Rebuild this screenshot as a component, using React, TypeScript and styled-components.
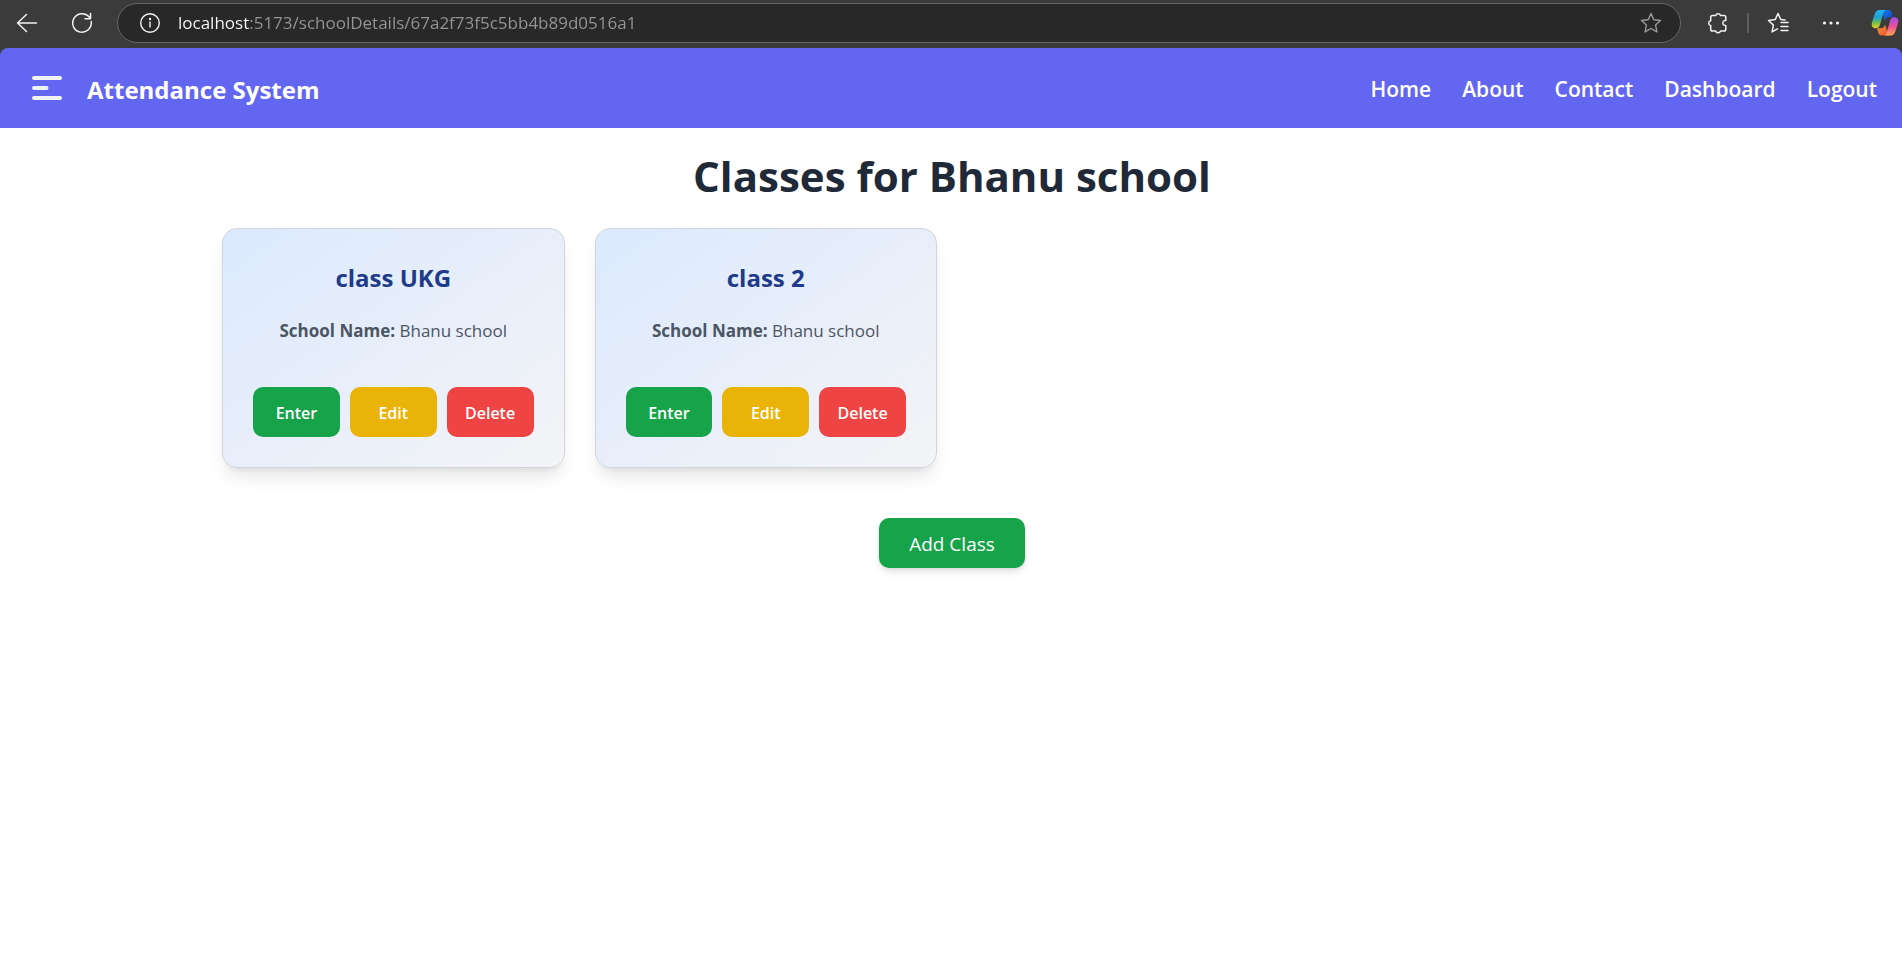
import React from "react";
import styled, { createGlobalStyle } from "styled-components";

const GlobalStyle = createGlobalStyle`
  *, *::before, *::after { box-sizing: border-box; }
  body {
    margin: 0;
    background: #ffffff;
    font-family: "Open Sans", "Noto Sans", sans-serif;
    font-size: 17px;
    line-height: 28px;
  }
  button, input { font: inherit; }
  h1, h2, p, ul { margin: 0; padding: 0; }
`;

const BrowserBar = styled.header`
  display: flex;
  align-items: center;
  height: 48px;
  padding: 0 3px 2px 12px;
  background: #3b3b3b;
  color: #f2f2f2;
`;

const IconButton = styled.button<{ $muted?: boolean }>`
  display: flex;
  flex: none;
  align-items: center;
  justify-content: center;
  padding: 0;
  border: 0;
  background: none;
  color: ${(p) => (p.$muted ? "#9b9b9b" : "#f2f2f2")};
  cursor: pointer;
`;

const StartTools = styled.div`
  display: flex;
  gap: 29px;
  margin-right: 24px;
`;

const AddressBar = styled.div`
  display: flex;
  flex: 1;
  align-items: center;
  gap: 17px;
  height: 40px;
  padding: 0 18px 0 21px;
  border: 1px solid #686868;
  border-radius: 20px;
  background: #282828;
`;

const AddressInput = styled.input`
  flex: 1;
  min-width: 0;
  height: 28px;
  padding: 0;
  border: 0;
  outline: 0;
  color: #969696;
  background: linear-gradient(90deg, #ffffff 71px, #969696 71px);
  background-clip: text;
  -webkit-background-clip: text;
  -webkit-text-fill-color: transparent;
`;

const EndTools = styled.div`
  display: flex;
  align-items: center;
  gap: 30px;
  margin-left: 26px;
`;

const ToolGroup = styled.div`
  display: flex;
  align-items: center;
  gap: 18px;
`;

const Divider = styled.span`
  width: 2px;
  height: 20px;
  background: #5e5e5e;
`;

const PageTop = styled.div`
  background: #3b3b3b;
`;

const NavBar = styled.nav`
  display: flex;
  align-items: center;
  justify-content: space-between;
  height: 80px;
  padding: 0 25px 0 30px;
  border-radius: 8px 8px 0 0;
  background: #6366f1;
  color: #ffffff;
`;

const Brand = styled.div`
  display: flex;
  align-items: center;
  gap: 23px;
`;

const BrandName = styled.span`
  padding-top: 3px;
  font-size: 24px;
  font-weight: 700;
  line-height: 32px;
`;

const NavLinks = styled.ul`
  display: flex;
  gap: 31px;
  padding-top: 2px;
  list-style: none;
`;

const NavLink = styled.a`
  font-size: 21px;
  font-weight: 600;
  line-height: 32px;
  color: #ffffff;
  text-decoration: none;
`;

const Main = styled.main`
  display: flex;
  flex-direction: column;
  align-items: center;
  padding: 20px 30px 20px 32px;
`;

const PageTitle = styled.h1`
  font-size: 42px;
  font-weight: 700;
  line-height: 56px;
  color: #1f2937;
  text-align: center;
`;

const ClassGrid = styled.section`
  display: grid;
  grid-template-columns: repeat(auto-fill, minmax(320px, 1fr));
  gap: 30px;
  width: 100%;
  max-width: 1460px;
  margin: 24px 0 50px;
`;

const Card = styled.article`
  padding: 30px;
  border: 1px solid #d1d5db;
  border-radius: 15px;
  background: linear-gradient(to bottom right, #dbeafe, #e8eefa 50%, #f3f4f6);
  box-shadow: 0 12px 18px -4px rgba(0, 0, 0, 0.1), 0 5px 7px -5px rgba(0, 0, 0, 0.1);
  text-align: center;
`;

const CardTitle = styled.h2`
  font-size: 24px;
  font-weight: 700;
  line-height: 38px;
  color: #1e3a8a;
`;

const CardText = styled.p`
  margin: 20px 0 42px;
  color: #4b5563;
`;

const CardActions = styled.div`
  display: grid;
  grid-template-columns: repeat(3, 1fr);
  gap: 10px;
`;

const tones = { green: "#16a34a", yellow: "#eab308", red: "#ef4444" };

const ActionButton = styled.button<{ $tone: keyof typeof tones }>`
  height: 50px;
  padding: 2px 0 0;
  border: 0;
  border-radius: 10px;
  background: ${(p) => tones[p.$tone]};
  color: #ffffff;
  font-size: 16px;
  font-weight: 600;
  cursor: pointer;
`;

const AddButton = styled(ActionButton)`
  padding: 2px 30px 0;
  font-size: 19px;
  font-weight: 400;
  box-shadow: 0 5px 8px -1px rgba(0, 0, 0, 0.1), 0 2px 5px -2px rgba(0, 0, 0, 0.1);
`;

const stroke = {
  fill: "none",
  stroke: "currentColor",
  strokeLinecap: "round",
  strokeLinejoin: "round",
} as const;

const BackIcon = () => (
  <svg width="30" height="22" viewBox="0 0 30 22" {...stroke} strokeWidth="1.5">
    <path d="M24.5 11H5.5M14.5 2.5L5.5 11l9 8.500" />
  </svg>
);

const ReloadIcon = () => (
  <svg width="22" height="22" viewBox="0 0 22 22" {...stroke} strokeWidth="1.5">
    <path d="M20.200 9.500A9.300 9.300 0 1 1 17.800 4.600L19.500 6.600M19.500 1.500V6.800H14" />
  </svg>
);

const InfoIcon = () => (
  <svg width="22" height="22" viewBox="0 0 22 22" {...stroke} strokeWidth="1.400">
    <circle cx="11" cy="11" r="9.300" />
    <path d="M11 10v5" />
    <circle cx="11" cy="7" r=".5" fill="currentColor" />
  </svg>
);

const StarIcon = () => (
  <svg width="22" height="22" viewBox="0 0 22 22" {...stroke} strokeWidth="1.4">
    <path d="M11 1.500l2.800 6.200 6.700.8-4.900 4.600 1.300 6.800L11 16.500l-5.900 3.400 1.300-6.800L1.500 8.500l6.700-.8z" />
  </svg>
);

const PuzzleIcon = () => (
  <svg width="22" height="22" viewBox="0 0 22 22" {...stroke} strokeWidth="1.500">
    <path d="M5.500 3.500h3.200a2.500 2.500 0 0 1 4.800 0H17a1.800 1.800 0 0 1 1.800 1.800V8.600h-1.200a2.500 2.500 0 0 0 0 4.800h1.200v3.800A1.800 1.800 0 0 1 17 19h-3.500a2.500 2.500 0 0 1-4.800 0H5.500a1.800 1.800 0 0 1-1.800-1.800V13.600a2.500 2.500 0 0 1 0-4.900V5.300A1.800 1.800 0 0 1 5.500 3.500z" />
  </svg>
);

const FavoritesIcon = () => (
  <svg width="24" height="22" viewBox="0 0 24 22" {...stroke} strokeWidth="1.5">
    <path d="M18 7.900l-4.200-.4L11 1.500 8.200 7.600l-6.700.9 4.900 4.600-1.300 6.800 5.400-3M14 10.500h7M14 14.500h7M14 18.500h7" />
  </svg>
);

const MoreIcon = () => (
  <svg width="20" height="20" viewBox="0 0 20 20" fill="currentColor">
    <circle cx="3.500" cy="10" r="1.600" />
    <circle cx="10" cy="10" r="1.600" />
    <circle cx="16.500" cy="10" r="1.600" />
  </svg>
);

const CopilotIcon = () => (
  <svg width="28" height="28" viewBox="0 0 28 28">
    <defs>
      <linearGradient id="cool" x1="0" y1="0" x2="0" y2="1">
        <stop offset="0" stopColor="#22b5f5" />
        <stop offset=".4" stopColor="#1fa0d0" />
        <stop offset=".7" stopColor="#6cc04a" />
        <stop offset="1" stopColor="#f2cf1d" />
      </linearGradient>
      <linearGradient id="warm" x1="0" y1="0" x2="0" y2="1">
        <stop offset="0" stopColor="#a04df0" />
        <stop offset=".5" stopColor="#ea4f97" />
        <stop offset="1" stopColor="#ffa24e" />
      </linearGradient>
      <linearGradient id="blue" x1="0" y1="0" x2="1" y2="1">
        <stop offset="0" stopColor="#1784e8" />
        <stop offset="1" stopColor="#1240c4" />
      </linearGradient>
      <linearGradient id="orange" x1="0" y1="0" x2="1" y2="1">
        <stop offset="0" stopColor="#f9a13a" />
        <stop offset="1" stopColor="#e8402c" />
      </linearGradient>
    </defs>
    <path fill="url(#blue)" d="M9 1h8.500c2.200 0 2.800 1.500 3.400 3.500l1 3.500H18c-2 0-3.400 1.300-4 3.500L12 6z" />
    <path fill="url(#orange)" d="M19 26.500h-8.500c-2.200 0-2.800-1.500-3.400-3.500l-1-3.800H10c2 0 3.400-1.200 4-3.400l2 5.500z" />
    <path fill="url(#cool)" d="M8.500 1H15c-1.800.5-2.500 2-3 4l-3 10.500c-.7 2.500-2 3.700-4 3.700-3.800 0-5-2.400-4-6L3.500 5.500C4.400 2.500 6 1 8.500 1z" />
    <path fill="url(#warm)" d="M19.500 26.500H13c1.800-.5 2.500-2 3-4L19 12c.7-2.500 2-3.800 4-3.800 3.800 0 5 2.300 4 6L24.500 22c-.9 3-2.500 4.500-5 4.500z" />
  </svg>
);

const MenuIcon = () => (
  <svg width="34" height="28" viewBox="0 0 34 28" {...stroke} strokeWidth="4">
    <path d="M4 4h26M4 14h12.500M4 24h26" />
  </svg>
);

const links = ["Home", "About", "Contact", "Dashboard", "Logout"];

const classes = [
  { name: "class UKG", school: "Bhanu school" },
  { name: "class 2", school: "Bhanu school" },
];

export default function App() {
  return (
    <>
      <GlobalStyle />
      <BrowserBar>
        <StartTools>
          <IconButton aria-label="Back"><BackIcon /></IconButton>
          <IconButton aria-label="Refresh"><ReloadIcon /></IconButton>
        </StartTools>
        <AddressBar>
          <IconButton aria-label="View site information"><InfoIcon /></IconButton>
          <AddressInput
            aria-label="Address"
            spellCheck={false}
            defaultValue="localhost:5173/schoolDetails/67a2f73f5c5bb4b89d0516a1"
          />
          <IconButton $muted aria-label="Add to favorites"><StarIcon /></IconButton>
        </AddressBar>
        <EndTools>
          <ToolGroup>
            <IconButton aria-label="Extensions"><PuzzleIcon /></IconButton>
            <Divider />
            <IconButton aria-label="Favorites"><FavoritesIcon /></IconButton>
          </ToolGroup>
          <IconButton aria-label="More"><MoreIcon /></IconButton>
          <IconButton aria-label="Copilot"><CopilotIcon /></IconButton>
        </EndTools>
      </BrowserBar>
      <PageTop>
        <NavBar>
          <Brand>
            <IconButton aria-label="Menu"><MenuIcon /></IconButton>
            <BrandName>Attendance System</BrandName>
          </Brand>
          <NavLinks>
            {links.map((label) => (
              <li key={label}>
                <NavLink href={`#${label.toLowerCase()}`}>{label}</NavLink>
              </li>
            ))}
          </NavLinks>
        </NavBar>
      </PageTop>
      <Main>
        <PageTitle>Classes for Bhanu school</PageTitle>
        <ClassGrid>
          {classes.map((item) => (
            <Card key={item.name}>
              <CardTitle>{item.name}</CardTitle>
              <CardText>
                <strong>School Name:</strong> {item.school}
              </CardText>
              <CardActions>
                <ActionButton $tone="green">Enter</ActionButton>
                <ActionButton $tone="yellow">Edit</ActionButton>
                <ActionButton $tone="red">Delete</ActionButton>
              </CardActions>
            </Card>
          ))}
        </ClassGrid>
        <AddButton $tone="green">Add Class</AddButton>
      </Main>
    </>
  );
}
